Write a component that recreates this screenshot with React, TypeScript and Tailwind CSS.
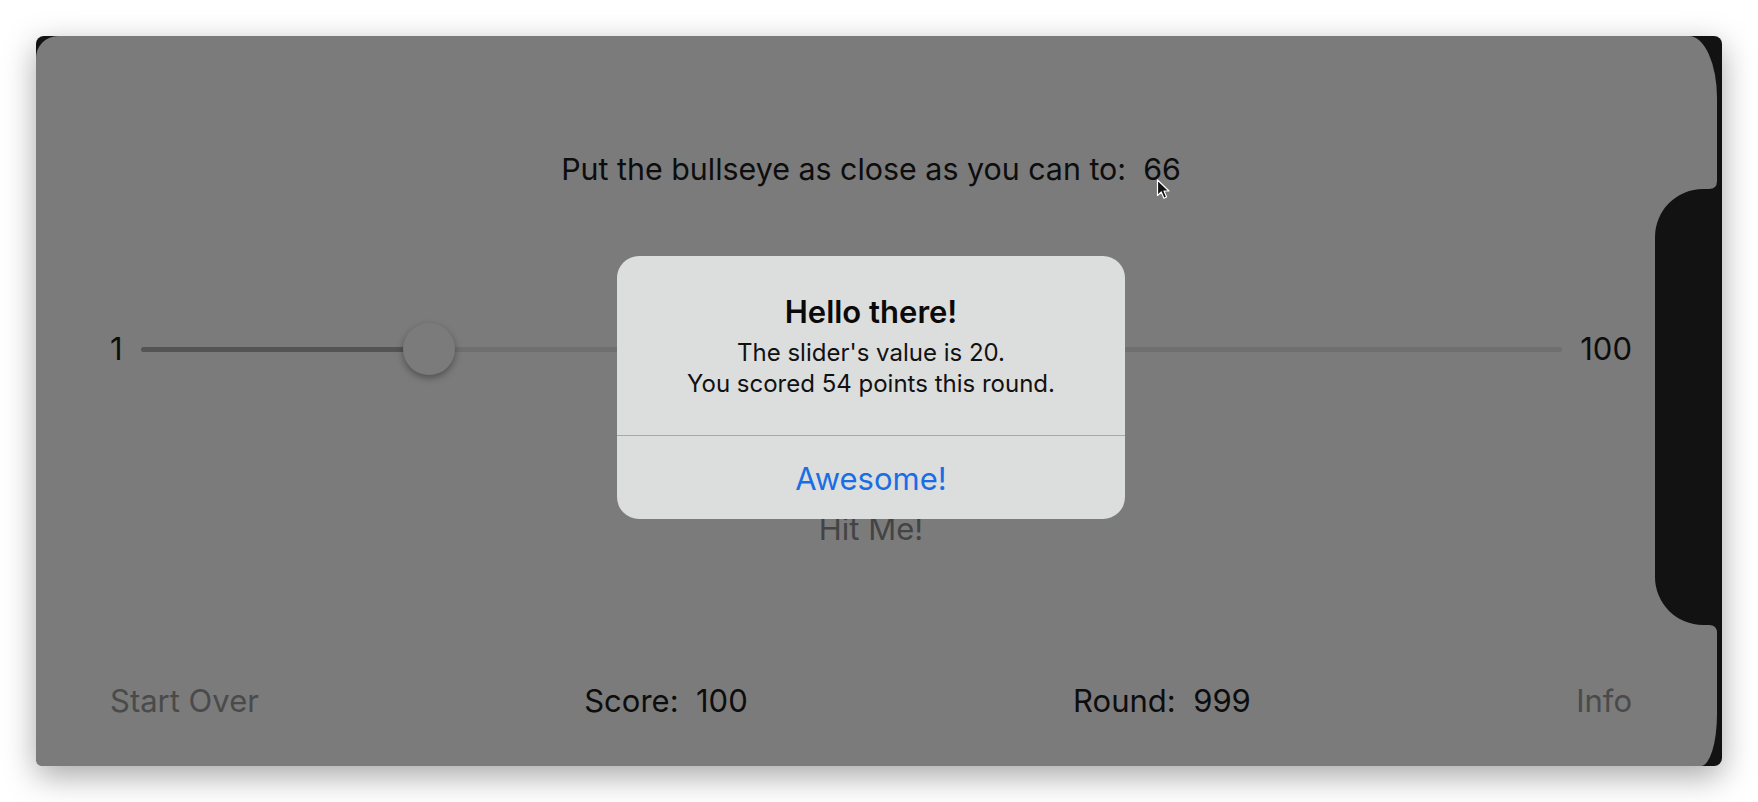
import React from "react";

// Bull's Eye round-end screen: iPhone X simulator (landscape) with the score alert showing.

const font = { fontFamily: "Inter, 'Noto Sans', sans-serif" };

function Notch() {
  return (
    <svg
      className="absolute right-0 top-[144px]"
      width="67"
      height="454"
      viewBox="0 0 67 454"
    >
      <path
        d="M67 0 L62 0 L62 1 Q62 9 54 9 L48 9 A48 48 0 0 0 0 57 L0 397 A48 48 0 0 0 48 445 L54 445 Q62 445 62 453 L62 454 L67 454 Z"
        fill="#121212"
      />
    </svg>
  );
}

function Cursor() {
  return (
    <svg className="absolute left-[1120px] top-[143px]" width="16" height="22" viewBox="0 0 16 22">
      <path
        d="M1.5 1 L1.5 16.5 L5.3 13 L7.9 19.2 L10.6 18 L8 12 L13 12 Z"
        fill="#111"
        stroke="#fff"
        strokeWidth="1.2"
        strokeLinejoin="round"
      />
    </svg>
  );
}

function Slider({ value }: { value: number }) {
  const frac = (value - 1) / 99;
  // thumb centre travels between the two thumb radii, like UISlider
  const centre = `calc(26px + (100% - 52px) * ${frac})`;
  return (
    <div className="flex items-center gap-[18px]">
      <span className="text-[31px] leading-[38px] text-[#0d0d0d]">1</span>
      <div className="relative flex-1 h-[52px] flex items-center">
        <div className="h-[5px] rounded-l-full bg-[#545454]" style={{ width: centre }} />
        <div className="h-[5px] flex-1 rounded-r-full bg-[#6f6f6f]" />
        <div
          className="absolute top-0 h-[52px] w-[52px] -ml-[26px] rounded-full bg-[#7b7b7b] shadow-[0_3px_7px_rgba(0,0,0,0.35)]"
          style={{ left: centre }}
        />
      </div>
      <span className="text-[31px] leading-[38px] text-[#0d0d0d]">100</span>
    </div>
  );
}

function Alert() {
  return (
    <div className="w-[508px] h-[263px] rounded-[22px] bg-[#dcdddd] flex flex-col">
      <div className="flex flex-col items-center pt-[37px] pb-[36px]">
        <div className="text-[31px] leading-[38px] font-semibold text-[#0a0a0a]">Hello there!</div>
        <div className="mt-[6px] text-[24px] leading-[31px] text-[#111] text-center">
          <div>The slider's value is 20.</div>
          <div>You scored 54 points this round.</div>
        </div>
      </div>
      <div className="h-px bg-[#a9a9a9]" />
      <div className="flex-1 flex items-center justify-center pt-[3px] text-[31px] text-[#1a6de4]">
        Awesome!
      </div>
    </div>
  );
}

export default function App() {
  return (
    <div className="w-full h-[802px] bg-white p-[36px]" style={font}>
      <div className="relative h-full flex rounded-[8px] bg-[#121212] shadow-[0_10px_32px_rgba(0,0,0,0.35)]">
        <div className="relative flex-1 mr-[5px] bg-[#7b7b7b] rounded-tl-[22px] rounded-bl-[6px] rounded-tr-[28px_62px] rounded-br-[16px_52px]">
          <div className="flex flex-col h-full pl-[74px] pr-[85px]">
            <div className="pt-[114px] text-center text-[30.4px] leading-[38px] text-[#0d0d0d] whitespace-pre">
              {"Put the bullseye as close as you can to:  66"}
            </div>
            <div className="mt-[135px]">
              <Slider value={20} />
            </div>
            <div className="mt-[135px] text-center text-[31px] leading-[38px] text-[#444]">Hit Me!</div>
            <div className="mt-[134px] flex justify-between text-[31px] leading-[38px] whitespace-pre">
              <span className="text-[#4a4a4a]">Start Over</span>
              <span className="text-[#0d0d0d]">{"Score:  100"}</span>
              <span className="text-[#0d0d0d]">{"Round:  999"}</span>
              <span className="text-[#4a4a4a]">Info</span>
            </div>
          </div>
          <div className="absolute inset-0 flex justify-center pl-[74px] pr-[85px] pt-[220px]">
            <Alert />
          </div>
        </div>
        <Notch />
        <Cursor />
      </div>
    </div>
  );
}
